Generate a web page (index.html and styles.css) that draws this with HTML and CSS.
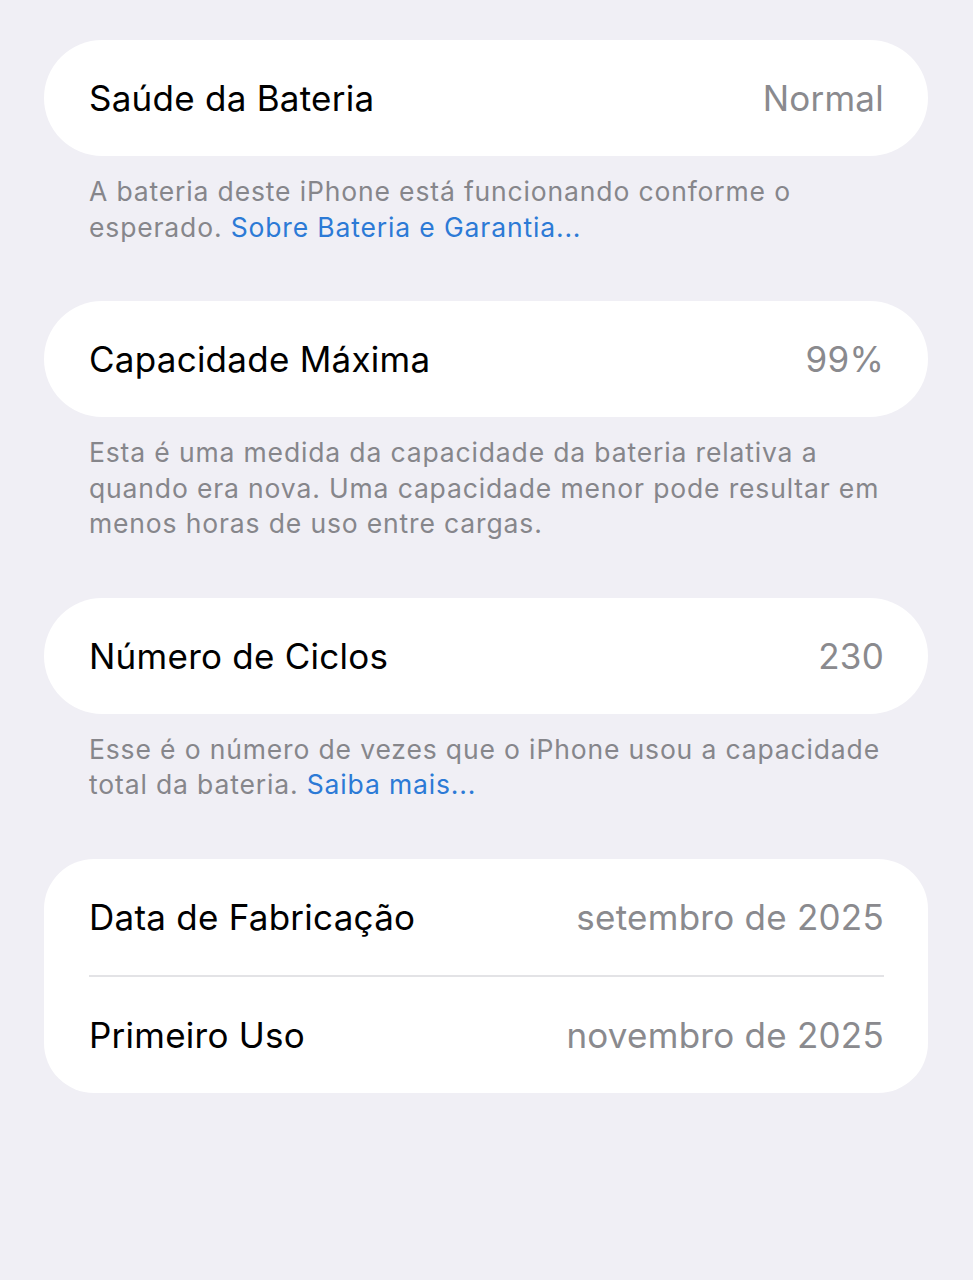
FILE: index.html
```html
<!DOCTYPE html>
<html lang="pt-BR">
<head>
<meta charset="utf-8">
<link rel="stylesheet" href="styles.css">
</head>
<body>
<main class="page">
  <section class="group">
    <div class="card">
      <div class="row"><span class="label">Saúde da Bateria</span><span class="value">Normal</span></div>
    </div>
    <p class="footer">A bateria deste iPhone está funcionando conforme o esperado. <span class="link">Sobre Bateria e Garantia...</span></p>
  </section>
  <section class="group">
    <div class="card">
      <div class="row"><span class="label">Capacidade Máxima</span><span class="value">99%</span></div>
    </div>
    <p class="footer">Esta é uma medida da capacidade da bateria relativa a quando era nova. Uma capacidade menor pode resultar em menos horas de uso entre cargas.</p>
  </section>
  <section class="group">
    <div class="card">
      <div class="row"><span class="label">Número de Ciclos</span><span class="value">230</span></div>
    </div>
    <p class="footer">Esse é o número de vezes que o iPhone usou a capacidade total da bateria. <span class="link">Saiba mais...</span></p>
  </section>
  <section class="group">
    <div class="card card-multi">
      <div class="row"><span class="label">Data de Fabricação</span><span class="value">setembro de 2025</span></div>
      <div class="sep"></div>
      <div class="row"><span class="label">Primeiro Uso</span><span class="value">novembro de 2025</span></div>
    </div>
  </section>
</main>
</body>
</html>
```
FILE: styles.css
```css
html, body {
  margin: 0;
  padding: 0;
  background: #f0eff5;
}
body {
  font-family: Inter, "Noto Sans", "Liberation Sans", sans-serif;
  -webkit-font-smoothing: antialiased;
}
.page {
  padding: 40px 45px 0 44px;
  display: flex;
  flex-direction: column;
}
.group {
  display: flex;
  flex-direction: column;
}
.card {
  background: #ffffff;
  border-radius: 58px;
  padding: 0 44px 0 45px;
}
.card-multi {
  border-radius: 50px;
}
.row {
  height: 116px;
  display: flex;
  align-items: center;
  justify-content: space-between;
  font-size: 35px;
  letter-spacing: 0.25px;
}
.label {
  color: #000000;
}
.value {
  color: #8a8a8e;
}
.sep {
  height: 2px;
  background: #e3e3e6;
}
.footer {
  margin: 0;
  padding: 18px 45px 56px 45px;
  font-size: 26.5px;
  line-height: 35.5px;
  color: #86868b;
  letter-spacing: 0.85px;
}
.link {
  color: #2c7ad6;
}
```
